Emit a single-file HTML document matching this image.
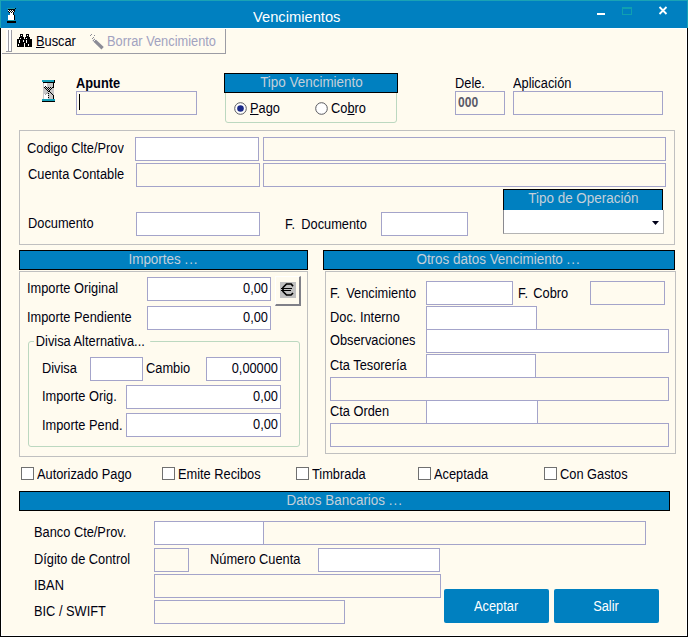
<!DOCTYPE html>
<html><head><meta charset="utf-8">
<style>
*{margin:0;padding:0;box-sizing:border-box}
html,body{width:688px;height:637px;overflow:hidden;background:#FFFBEF;font-family:"Liberation Sans",sans-serif}
.a{position:absolute}
.l{position:absolute;font-size:14px;line-height:13px;white-space:nowrap;color:#000010;transform:scaleX(.915);transform-origin:0 0}
.i{position:absolute;border:1px solid #A4A4CA;background:#FFFBEF}
.w{background:#FFFFFF}
.n{position:absolute;font-size:14px;line-height:13px;white-space:nowrap;color:#000010;text-align:right;transform:scaleX(.915);transform-origin:100% 0}
.h{position:absolute;background:#0080C0;border:1px solid #000;color:#C4D0DA;font-size:14px;line-height:13px;text-align:center;white-space:nowrap}
.h span{display:inline-block;transform:scaleX(.96)}
.btn span{display:inline-block;transform:scaleX(.915)}
.d{letter-spacing:1px}
.g{position:absolute;border:1px solid #C0C0C0}
.rg{position:absolute;border:1px solid #BCD8C0;border-radius:3px}
.cb{position:absolute;width:13px;height:13px;border:1px solid #707070;background:#fff}
.btn{position:absolute;background:#0080C0;border-radius:2px;color:#fff;font-size:14px;line-height:13px;text-align:center}
</style></head><body>
<!-- title bar -->
<div class="a" style="left:0;top:0;width:688px;height:28px;background:#0080C0"></div>
<div class="a" style="left:0;top:0;width:688px;height:1px;background:#1AA3B5"></div>
<div class="a" style="left:0;top:0;width:1px;height:28px;background:#1AA3B5"></div>
<div class="a" style="left:687px;top:0;width:1px;height:28px;background:#1AA3B5"></div>
<div class="l" style="left:253px;top:9px;font-size:15px;line-height:15px;color:#fff;transform:scaleX(.98)">Vencimientos</div>
<div class="a" style="left:597px;top:13px;width:8px;height:2px;background:#fff"></div>
<div class="a" style="left:622px;top:7px;width:10px;height:8px;border:1px solid #10A0B0;border-top-width:2px"></div>
<svg class="a" style="left:658px;top:6px" width="10" height="9" viewBox="0 0 10 9"><path d="M1.5 1 L8.5 8 M8.5 1 L1.5 8" stroke="#fff" stroke-width="1.8"/></svg>
<!-- frame -->
<div class="a" style="left:0;top:28px;width:1px;height:609px;background:#000"></div>
<div class="a" style="left:687px;top:28px;width:1px;height:609px;background:#000"></div>
<div class="a" style="left:0;top:636px;width:688px;height:1px;background:#000"></div>
<div class="a" style="left:1px;top:28px;width:1px;height:608px;background:#fff"></div>
<div class="a" style="left:686px;top:28px;width:1px;height:608px;background:#fff"></div>
<div class="a" style="left:1px;top:28px;width:686px;height:1px;background:#fff"></div>
<div class="a" style="left:1px;top:635px;width:686px;height:1px;background:#fff"></div>
<!-- title icon -->
<svg class="a" style="left:7px;top:8px" width="9" height="15" viewBox="0 0 9 15" shape-rendering="crispEdges">
<rect x="0" y="0" width="8" height="1" fill="#1A9AA8"/><rect x="8" y="0" width="1" height="1" fill="#000"/>
<rect x="1" y="1" width="7" height="1" fill="#000"/>
<rect x="1" y="2" width="6" height="2" fill="#fff"/><rect x="7" y="2" width="1" height="2" fill="#000"/>
<g fill="#000"><rect x="2" y="2" width="1" height="1"/><rect x="4" y="2" width="1" height="1"/><rect x="6" y="2" width="1" height="1"/>
<rect x="1" y="3" width="1" height="1"/><rect x="3" y="3" width="1" height="1"/><rect x="5" y="3" width="1" height="1"/>
<rect x="2" y="4" width="1" height="1"/><rect x="4" y="4" width="1" height="1"/><rect x="6" y="4" width="1" height="1"/></g>
<rect x="3" y="4" width="1" height="1" fill="#fff"/><rect x="5" y="4" width="1" height="1" fill="#fff"/>
<rect x="3" y="5" width="3" height="2" fill="#fff"/><rect x="6" y="5" width="1" height="2" fill="#000"/>
<rect x="1" y="7" width="6" height="5" fill="#fff"/><rect x="7" y="7" width="1" height="5" fill="#000"/>
<rect x="1" y="12" width="7" height="1" fill="#1A9AA8"/>
<rect x="0" y="13" width="9" height="2" fill="#000"/>
</svg>
<!-- toolbar -->
<div class="a" style="left:2px;top:53px;width:224px;height:1px;background:#9C9CA4"></div>
<div class="a" style="left:225px;top:29px;width:1px;height:25px;background:#9C9CA4"></div>
<div class="a" style="left:6px;top:30px;width:2px;height:21px;background:#fff"></div>
<div class="a" style="left:8px;top:30px;width:1px;height:22px;background:#9C9CA4"></div>
<div class="a" style="left:9px;top:30px;width:2px;height:21px;background:#fff"></div>
<div class="a" style="left:11px;top:30px;width:1px;height:22px;background:#9C9CA4"></div>
<div class="a" style="left:6px;top:51px;width:6px;height:1px;background:#9C9CA4"></div>
<svg class="a" style="left:17px;top:34px" width="15" height="13" viewBox="0 0 15 13" shape-rendering="crispEdges">
<g fill="#000"><rect x="3" y="0" width="3" height="3"/><rect x="9" y="0" width="3" height="3"/>
<rect x="2" y="3" width="5" height="2"/><rect x="8" y="3" width="5" height="2"/>
<rect x="0" y="5" width="7" height="8"/><rect x="8" y="5" width="7" height="8"/><rect x="6" y="5" width="3" height="4"/></g>
<g fill="#fff"><rect x="4" y="1" width="1" height="1"/><rect x="10" y="1" width="1" height="1"/><rect x="3" y="4" width="1" height="1"/><rect x="9" y="4" width="1" height="1"/>
<rect x="2" y="6" width="1" height="3"/><rect x="6" y="6" width="1" height="2"/><rect x="9" y="6" width="1" height="3"/><rect x="1" y="10" width="1" height="2"/><rect x="11" y="10" width="1" height="2"/></g>
</svg>
<div class="l" style="left:36px;top:35px"><span style="text-decoration:underline">B</span>uscar</div>
<svg class="a" style="left:89px;top:33px" width="16" height="17" viewBox="0 0 16 17">
<path d="M4.6 6.6 L13.6 15.2" stroke="#8C8C96" stroke-width="3.3"/>
<rect x="1" y="2" width="1" height="1" fill="#8C8C96"/><rect x="2" y="1" width="1" height="1" fill="#8C8C96"/><rect x="5" y="2" width="1" height="1" fill="#8C8C96"/>
<rect x="3" y="5" width="1" height="1" fill="#8C8C96"/><rect x="4" y="4" width="1" height="1" fill="#8C8C96"/>
<path d="M4.5 8.5 L7 6" stroke="#fff" stroke-width="0.9"/>
</svg>
<div class="l" style="left:107px;top:35px;color:#A2A2C0">Borrar Vencimiento</div>
<!-- top section -->
<svg class="a" style="left:42px;top:80px" width="13" height="22" viewBox="0 0 13 22" shape-rendering="crispEdges">
<rect x="0" y="0" width="12" height="2" fill="#16A0B8"/><rect x="12" y="0" width="1" height="2" fill="#000"/>
<rect x="1" y="2" width="12" height="1" fill="#000"/>
<rect x="1" y="3" width="11" height="16" fill="#C8C8C8"/>
<rect x="2" y="3" width="3" height="4" fill="#fff"/><rect x="2" y="14" width="4" height="5" fill="#fff"/>
<g fill="#000"><rect x="11" y="3" width="1" height="5"/><rect x="11" y="15" width="1" height="4"/>
<rect x="3" y="6" width="1" height="1"/>
<rect x="2" y="7" width="1" height="1"/><rect x="4" y="7" width="1" height="1"/><rect x="6" y="7" width="1" height="1"/><rect x="8" y="7" width="1" height="1"/><rect x="10" y="7" width="1" height="1"/>
<rect x="3" y="8" width="1" height="1"/><rect x="5" y="8" width="1" height="1"/><rect x="7" y="8" width="1" height="1"/><rect x="9" y="8" width="1" height="1"/>
<rect x="4" y="9" width="1" height="1"/><rect x="6" y="9" width="1" height="1"/><rect x="8" y="9" width="1" height="1"/>
<rect x="5" y="10" width="1" height="1"/><rect x="7" y="10" width="1" height="1"/>
<rect x="6" y="11" width="2" height="1"/><rect x="8" y="12" width="1" height="1"/><rect x="9" y="13" width="1" height="1"/><rect x="10" y="14" width="1" height="1"/>
<rect x="6" y="13" width="1" height="1"/><rect x="6" y="15" width="1" height="1"/><rect x="6" y="17" width="1" height="1"/></g>
<g fill="#9A9A9A"><rect x="5" y="12" width="1" height="1"/><rect x="4" y="13" width="1" height="1"/><rect x="3" y="14" width="1" height="1"/></g>
<rect x="0" y="19" width="13" height="2" fill="#16A0B8"/>
<rect x="0" y="21" width="13" height="1" fill="#000"/>
</svg>
<div class="l" style="left:76px;top:77px;font-weight:bold">Apunte</div>
<div class="i" style="left:76px;top:91px;width:121px;height:24px"></div>
<div class="a" style="left:79px;top:94px;width:1px;height:16px;background:#000"></div>
<div class="rg" style="left:225px;top:88px;width:172px;height:35px"></div>
<div class="h" style="left:224px;top:73px;width:174px;height:20px;padding-top:2px"><span>Tipo Vencimiento</span></div>
<svg class="a" style="left:234px;top:102px" width="13" height="13" viewBox="0 0 13 13"><circle cx="6.5" cy="6.5" r="5.8" fill="#fff" stroke="#58585E" stroke-width="1"/><circle cx="6.5" cy="6.5" r="3.3" fill="#1A2888"/></svg>
<div class="l" style="left:250px;top:102px"><span style="text-decoration:underline">P</span>ago</div>
<svg class="a" style="left:315px;top:102px" width="13" height="13" viewBox="0 0 13 13"><circle cx="6.5" cy="6.5" r="5.8" fill="#fff" stroke="#58585E" stroke-width="1"/></svg>
<div class="l" style="left:331px;top:102px">Co<span style="text-decoration:underline">b</span>ro</div>
<div class="l" style="left:455px;top:77px">Dele.</div>
<div class="i" style="left:455px;top:91px;width:50px;height:24px"></div>
<div class="l" style="left:458px;top:96px;font-weight:bold;color:#5A5A68;transform:scaleX(.86)">000</div>
<div class="l" style="left:513px;top:77px">Aplicación</div>
<div class="i" style="left:513px;top:91px;width:150px;height:24px"></div>
<!-- group 1 -->
<div class="g" style="left:19px;top:130px;width:656px;height:115px"></div>
<div class="l" style="left:27px;top:142px">Codigo Clte/Prov</div>
<div class="i w" style="left:135px;top:137px;width:124px;height:24px"></div>
<div class="i" style="left:263px;top:137px;width:403px;height:24px"></div>
<div class="l" style="left:28px;top:168px">Cuenta Contable</div>
<div class="i" style="left:136px;top:163px;width:124px;height:24px"></div>
<div class="i" style="left:263px;top:163px;width:403px;height:24px"></div>
<div class="l" style="left:28px;top:217px">Documento</div>
<div class="i w" style="left:136px;top:212px;width:124px;height:24px"></div>
<div class="l" style="left:285px;top:218px;word-spacing:3px">F. Documento</div>
<div class="i w" style="left:381px;top:212px;width:87px;height:24px"></div>
<div class="h" style="left:503px;top:189px;width:160px;height:22px;padding-top:2px"><span>Tipo de Operación</span></div>
<div class="a" style="left:503px;top:210px;width:161px;height:24px;border:1px solid #B4B4B4;border-left-color:#8A8A90;border-top:none;background:#fff"></div>
<svg class="a" style="left:652px;top:221px" width="8" height="5" viewBox="0 0 8 5"><path d="M0 0 H7 L3.5 4 Z" fill="#000018"/></svg>
<!-- importes -->
<div class="g" style="left:19px;top:271px;width:289px;height:186px"></div>
<div class="h" style="left:19px;top:250px;width:289px;height:20px;padding-top:2px"><span>Importes <i class="d" style="font-style:normal">...</i></span></div>
<div class="l" style="left:27px;top:282px">Importe Original</div>
<div class="i w" style="left:147px;top:277px;width:124px;height:24px"></div>
<div class="n" style="left:147px;top:282px;width:121px">0,00</div>
<div class="a" style="left:275px;top:276px;width:26px;height:30px;background:#FFFBEF;border-top:1px solid #fff;border-left:1px solid #fff;border-right:2px solid #808088;border-bottom:2px solid #808088"></div>
<div class="a" style="left:280px;top:282px;width:16px;height:16px;background:#C0C0C0"></div>
<svg class="a" style="left:280px;top:282px" width="16" height="16" viewBox="0 0 16 16"><path d="M13 4.2 L11.2 2 H6.5 L3 5.5 V9.5 L6.5 13 H11 L13 11" fill="none" stroke="#000" stroke-width="1.7" stroke-linejoin="miter"/><path d="M1 6.5 H12 M1 8.5 H11" stroke="#000" stroke-width="1.1"/></svg>
<div class="l" style="left:27px;top:311px">Importe Pendiente</div>
<div class="i w" style="left:147px;top:306px;width:124px;height:24px"></div>
<div class="n" style="left:147px;top:311px;width:121px">0,00</div>
<div class="rg" style="left:28px;top:341px;width:272px;height:106px"></div>
<div class="l" style="left:34px;top:335px;padding:0 2px;background:#FFFBEF">Divisa Alternativa...&nbsp;</div>
<div class="l" style="left:42px;top:362px">Divisa</div>
<div class="i w" style="left:90px;top:357px;width:53px;height:24px"></div>
<div class="l" style="left:146px;top:362px">Cambio</div>
<div class="i w" style="left:206px;top:357px;width:75px;height:24px"></div>
<div class="n" style="left:206px;top:362px;width:72px">0,00000</div>
<div class="l" style="left:42px;top:390px">Importe Orig.</div>
<div class="i w" style="left:126px;top:385px;width:155px;height:24px"></div>
<div class="n" style="left:126px;top:390px;width:152px">0,00</div>
<div class="l" style="left:42px;top:419px">Importe Pend.</div>
<div class="i w" style="left:126px;top:413px;width:155px;height:24px"></div>
<div class="n" style="left:126px;top:418px;width:152px">0,00</div>
<!-- otros -->
<div class="g" style="left:325px;top:271px;width:351px;height:183px"></div>
<div class="h" style="left:323px;top:250px;width:352px;height:20px;padding-top:2px"><span>Otros datos Vencimiento <i class="d" style="font-style:normal">...</i></span></div>
<div class="l" style="left:330px;top:287px;word-spacing:3px">F. Vencimiento</div>
<div class="i w" style="left:426px;top:281px;width:87px;height:24px"></div>
<div class="l" style="left:518px;top:287px;word-spacing:2px">F. Cobro</div>
<div class="i" style="left:590px;top:281px;width:75px;height:24px"></div>
<div class="l" style="left:330px;top:311px">Doc. Interno</div>
<div class="i w" style="left:426px;top:306px;width:111px;height:24px"></div>
<div class="l" style="left:330px;top:334px">Observaciones</div>
<div class="i w" style="left:426px;top:329px;width:243px;height:24px"></div>
<div class="l" style="left:330px;top:359px">Cta Tesorería</div>
<div class="i w" style="left:426px;top:354px;width:110px;height:24px"></div>
<div class="i" style="left:330px;top:377px;width:339px;height:24px"></div>
<div class="l" style="left:330px;top:405px">Cta Orden</div>
<div class="i w" style="left:426px;top:400px;width:112px;height:24px"></div>
<div class="i" style="left:330px;top:423px;width:339px;height:24px"></div>
<!-- checkboxes -->
<div class="cb" style="left:21px;top:467px"></div><div class="l" style="left:37px;top:468px">Autorizado Pago</div>
<div class="cb" style="left:162px;top:467px"></div><div class="l" style="left:178px;top:468px">Emite Recibos</div>
<div class="cb" style="left:296px;top:467px"></div><div class="l" style="left:312px;top:468px">Timbrada</div>
<div class="cb" style="left:418px;top:467px"></div><div class="l" style="left:434px;top:468px">Aceptada</div>
<div class="cb" style="left:544px;top:467px"></div><div class="l" style="left:560px;top:468px">Con Gastos</div>
<!-- datos bancarios -->
<div class="h" style="left:19px;top:491px;width:651px;height:20px;padding-top:2px"><span>Datos Bancarios <i class="d" style="font-style:normal">...</i></span></div>
<div class="l" style="left:34px;top:526px">Banco Cte/Prov.</div>
<div class="i w" style="left:154px;top:521px;width:110px;height:24px"></div>
<div class="i" style="left:263px;top:521px;width:383px;height:24px"></div>
<div class="l" style="left:34px;top:553px">Dígito de Control</div>
<div class="i" style="left:154px;top:548px;width:35px;height:24px"></div>
<div class="l" style="left:210px;top:553px">Número Cuenta</div>
<div class="i w" style="left:318px;top:548px;width:122px;height:24px"></div>
<div class="l" style="left:34px;top:579px">IBAN</div>
<div class="i" style="left:154px;top:574px;width:287px;height:24px"></div>
<div class="l" style="left:34px;top:605px">BIC / SWIFT</div>
<div class="i" style="left:154px;top:600px;width:191px;height:24px"></div>
<div class="btn" style="left:444px;top:589px;width:105px;height:34px;padding-top:11px"><span>Aceptar</span></div>
<div class="btn" style="left:554px;top:589px;width:105px;height:34px;padding-top:11px"><span>Salir</span></div>
</body></html>
